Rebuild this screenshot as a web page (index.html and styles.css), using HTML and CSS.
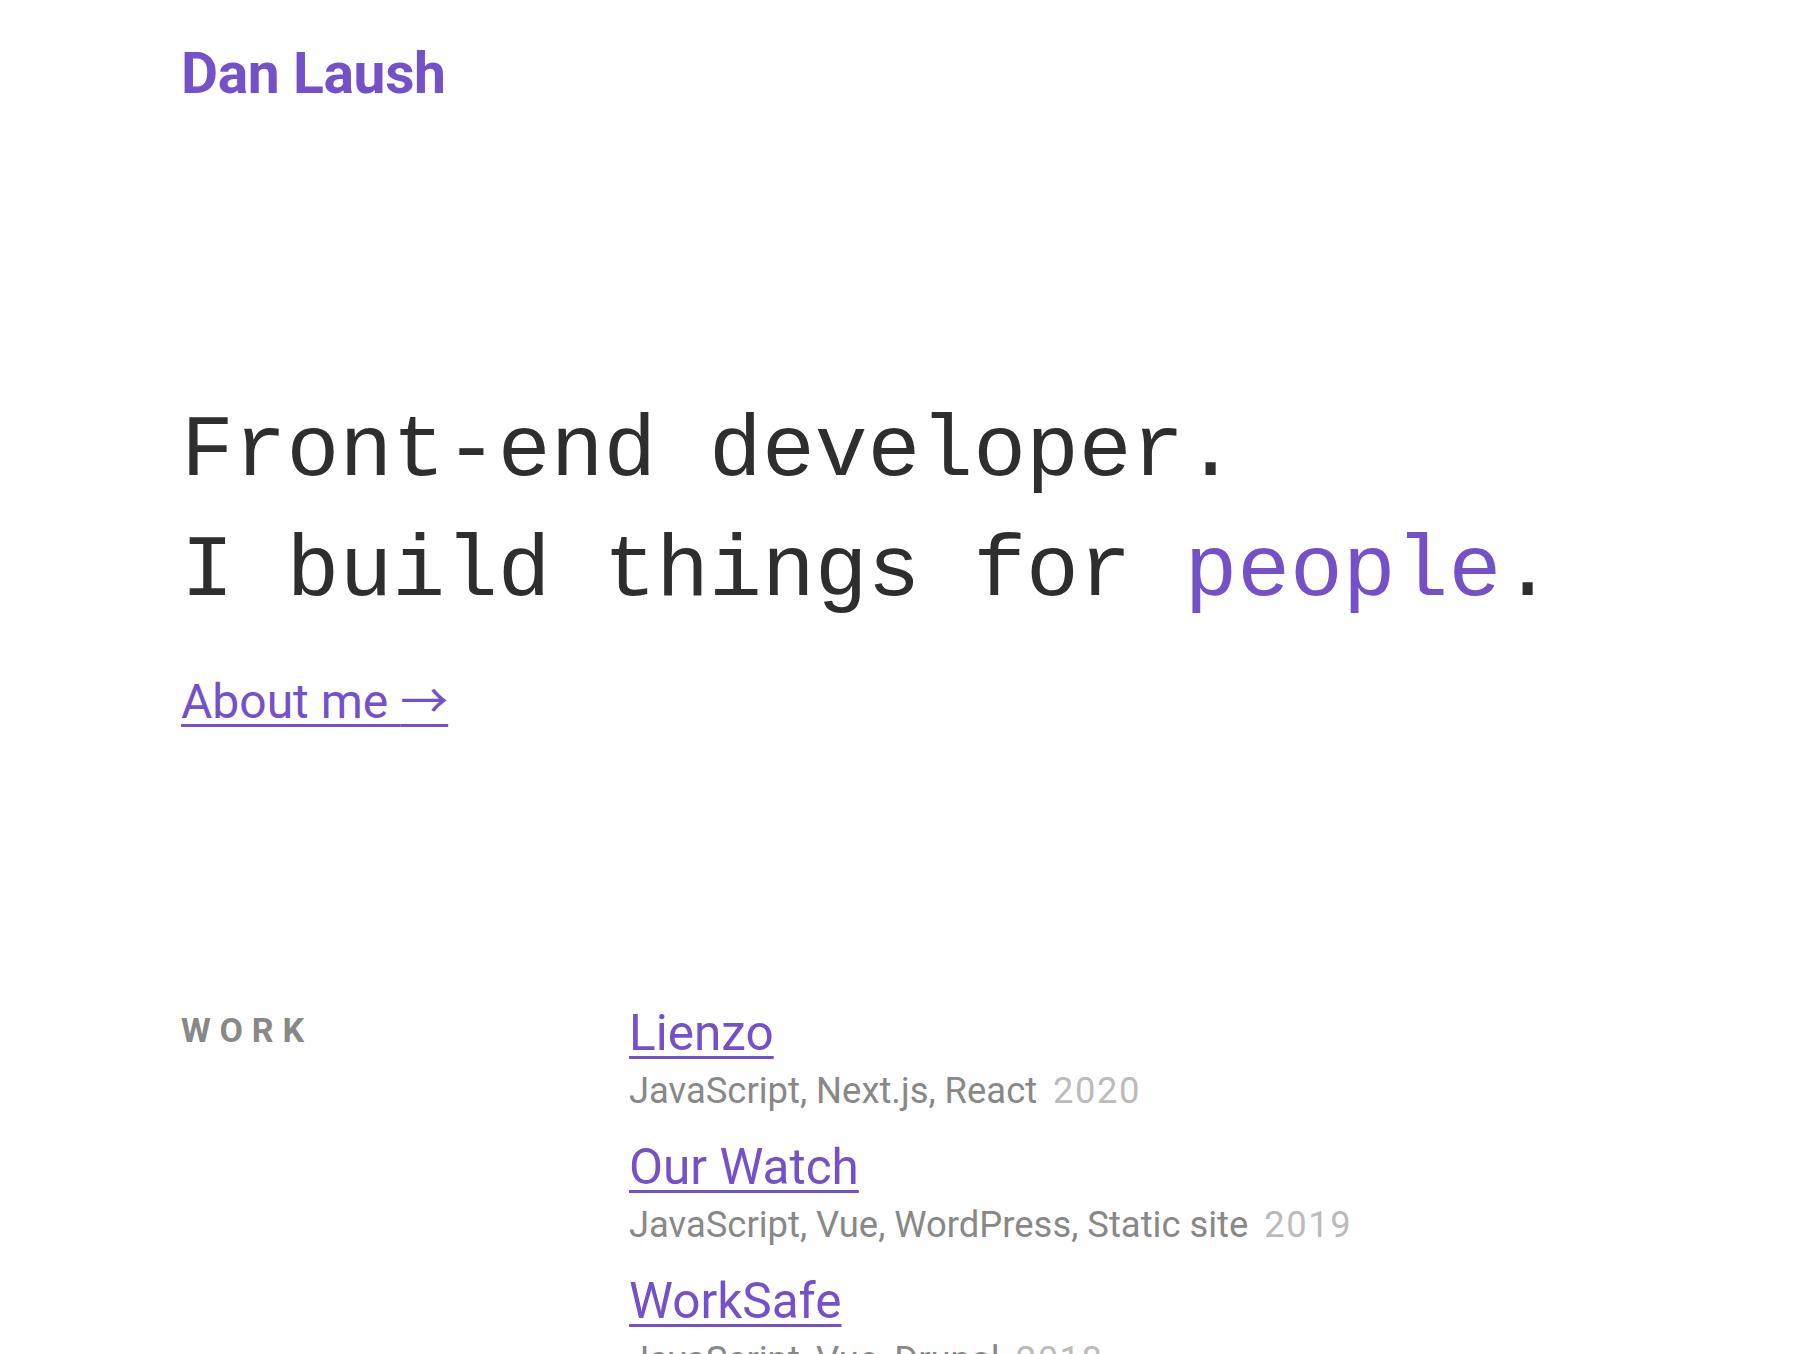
FILE: index.html
```html
<!DOCTYPE html>
<html lang="en">
<head>
<meta charset="utf-8">
<title>Dan Laush</title>
<link rel="stylesheet" href="styles.css">
</head>
<body>
<div class="page">
  <header class="site-header">
    <a class="brand" href="#">Dan Laush</a>
  </header>
  <main>
    <section class="hero">
      <h1 class="hero-title">Front-end developer.<br>I build things for <span class="accent">people</span>.</h1>
      <a class="about-link" href="#">About me <span class="arrow">→</span></a>
    </section>
    <section class="work">
      <h2 class="work-label">Work</h2>
      <ul class="work-list">
        <li class="work-item">
          <a class="work-link" href="#">Lienzo</a>
          <p class="work-meta">JavaScript, Next.js, React<span class="year">2020</span></p>
        </li>
        <li class="work-item">
          <a class="work-link" href="#">Our Watch</a>
          <p class="work-meta">JavaScript, Vue, WordPress, Static site<span class="year">2019</span></p>
        </li>
        <li class="work-item">
          <a class="work-link" href="#">WorkSafe</a>
          <p class="work-meta">JavaScript, Vue, Drupal<span class="year">2018</span></p>
        </li>
      </ul>
    </section>
  </main>
</div>
</body>
</html>
```

FILE: styles.css
```css
html, body {
  margin: 0;
  padding: 0;
  background: #ffffff;
}

body {
  font-family: Roboto, "Liberation Sans", sans-serif;
  color: #2b2b2b;
}

.page {
  padding: 40px 183px 0 181px;
}

.site-header {
  display: flex;
}

.brand {
  font-family: Roboto, "Liberation Sans", sans-serif;
  font-weight: 700;
  font-size: 57px;
  line-height: 67px;
  color: #7551c9;
  text-decoration: none;
  letter-spacing: -0.4px;
}

.hero {
  padding-top: 285px;
}

.hero-title {
  margin: 0;
  font-family: "Liberation Mono", "DejaVu Sans Mono", monospace;
  font-weight: 400;
  font-size: 88px;
  line-height: 120px;
  color: #2e2e2e;
}

.accent {
  color: #7551c9;
}

.about-link {
  display: inline-block;
  margin-top: 41px;
  font-size: 48px;
  line-height: 57px;
  color: #7551c9;
  text-decoration: underline;
  text-decoration-thickness: 3px;
  text-underline-offset: 6px;
}

.arrow {
  font-family: "Noto Sans CJK SC", "DejaVu Sans", sans-serif;
  line-height: 1;
}

.work {
  display: grid;
  grid-template-columns: 448px 1fr;
  margin-top: 274px;
}

.work-label {
  margin: 6px 0 0 0;
  font-size: 34px;
  line-height: 1.2;
  font-weight: 700;
  text-transform: uppercase;
  letter-spacing: 0.26em;
  color: #888888;
}

.work-list {
  list-style: none;
  margin: 0;
  padding: 0;
}

.work-item {
  margin-bottom: 25px;
}

.work-link {
  font-size: 49.5px;
  line-height: 1.2;
  color: #7551c9;
  text-decoration: underline;
  text-decoration-thickness: 3px;
  text-underline-offset: 6px;
}

.work-meta {
  margin: 6px 0 0 0;
  font-size: 36.4px;
  line-height: 1.2;
  color: #888888;
}

.year {
  margin-left: 16px;
  letter-spacing: 1.5px;
  color: #bbbbbb;
}
```
